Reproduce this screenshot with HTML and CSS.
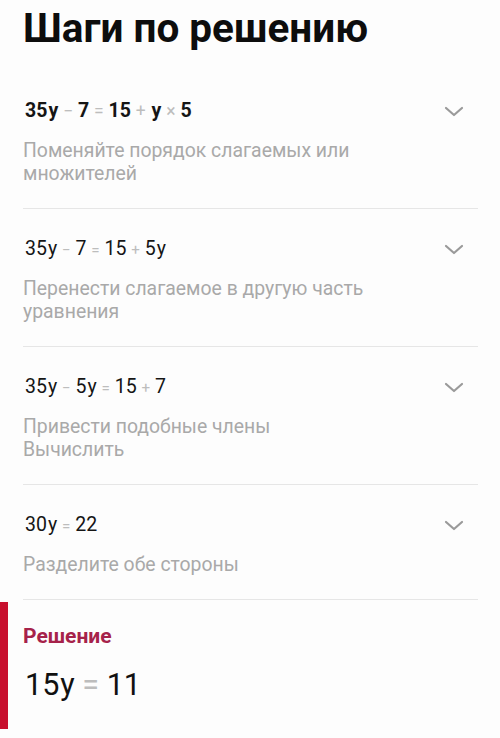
FILE: index.html
```html
<!DOCTYPE html>
<html lang="ru">
<head>
  <meta charset="UTF-8" />
  <title>Шаги по решению</title>
  <link rel="stylesheet" href="styles.css">
</head>
<body>
  <div class="page">
    <h1>Шаги по решению</h1>

    <div class="step">
      <div class="step-head">
        <div class="eq eq-bold">35<span class="var">y</span> <span class="op">−</span> 7 <span class="op">=</span> 15 <span class="op">+</span> <span class="var">y</span> <span class="op">×</span> 5</div>
        <svg class="chevron" width="24" height="24" viewBox="0 0 24 24"><path d="M4 9l8 7 8-7" fill="none" stroke="#9a9a9a" stroke-width="2.2" stroke-linecap="round" stroke-linejoin="round"/></svg>
      </div>
      <div class="step-desc">Поменяйте порядок слагаемых или<br>множителей</div>
    </div>

    <div class="step">
      <div class="step-head">
        <div class="eq eq-light">35<span class="var">y</span> <span class="op">−</span> 7 <span class="op">=</span> 15 <span class="op">+</span> 5<span class="var">y</span></div>
        <svg class="chevron" width="24" height="24" viewBox="0 0 24 24"><path d="M4 9l8 7 8-7" fill="none" stroke="#9a9a9a" stroke-width="2.2" stroke-linecap="round" stroke-linejoin="round"/></svg>
      </div>
      <div class="step-desc">Перенести слагаемое в другую часть<br>уравнения</div>
    </div>

    <div class="step">
      <div class="step-head">
        <div class="eq eq-light">35<span class="var">y</span> <span class="op">−</span> 5<span class="var">y</span> <span class="op">=</span> 15 <span class="op">+</span> 7</div>
        <svg class="chevron" width="24" height="24" viewBox="0 0 24 24"><path d="M4 9l8 7 8-7" fill="none" stroke="#9a9a9a" stroke-width="2.2" stroke-linecap="round" stroke-linejoin="round"/></svg>
      </div>
      <div class="step-desc">Привести подобные члены<br>Вычислить</div>
    </div>

    <div class="step">
      <div class="step-head">
        <div class="eq eq-light">30<span class="var">y</span> <span class="op">=</span> 22</div>
        <svg class="chevron" width="24" height="24" viewBox="0 0 24 24"><path d="M4 9l8 7 8-7" fill="none" stroke="#9a9a9a" stroke-width="2.2" stroke-linecap="round" stroke-linejoin="round"/></svg>
      </div>
      <div class="step-desc">Разделите обе стороны</div>
    </div>

    <div class="solution">
      <div class="solution-title">Решение</div>
      <div class="solution-eq">15<span class="var">y</span> <span class="op">=</span> 11</div>
    </div>
  </div>
</body>
</html>
```

FILE: styles.css
```css
body {
  margin: 0;
  background-color: #fdfdfd;
  font-family: Roboto, "Noto Sans", Arial, sans-serif;
  color: #111;
}
.page {
  padding: 0 22px 0 23px;
}
h1 {
  margin: 0;
  padding-top: 4px;
  font-size: 40.5px;
  line-height: 48px;
  font-weight: 700;
  color: #0d0d0d;
  margin-bottom: 19px;
}
.step {
  padding: 28px 0 23px;
  border-bottom: 1px solid #e6e6e6;
}
.step-head {
  display: flex;
  align-items: center;
  justify-content: space-between;
  height: 24px;
}
.chevron {
  margin-right: 12px;
}
.eq {
  font-size: 19.5px;
  line-height: 24px;
  padding-left: 2px;
  color: #151515;
}
.eq-bold {
  font-weight: 700;
}
.var {
  margin-left: 1px;
}
.op {
  color: #bdbdbd;
  font-weight: 400;
  font-size: 0.9em;
}
.eq-light .op {
  font-size: 0.78em;
}
.step-desc {
  margin-top: 16px;
  font-size: 19.4px;
  line-height: 23px;
  color: #a9a9a9;
}
.solution {
  margin-left: -23px;
  margin-top: 2px;
  border-left: 8px solid #c8102e;
  padding: 22px 0 26px 15px;
}
.solution-title {
  font-size: 21px;
  line-height: 24px;
  font-weight: 700;
  color: #a6224a;
}
.solution-eq {
  margin-top: 19px;
  font-size: 30.5px;
  line-height: 36px;
  padding-left: 2px;
  color: #111;
}
.solution-eq .op {
  font-size: 1em;
}
```
